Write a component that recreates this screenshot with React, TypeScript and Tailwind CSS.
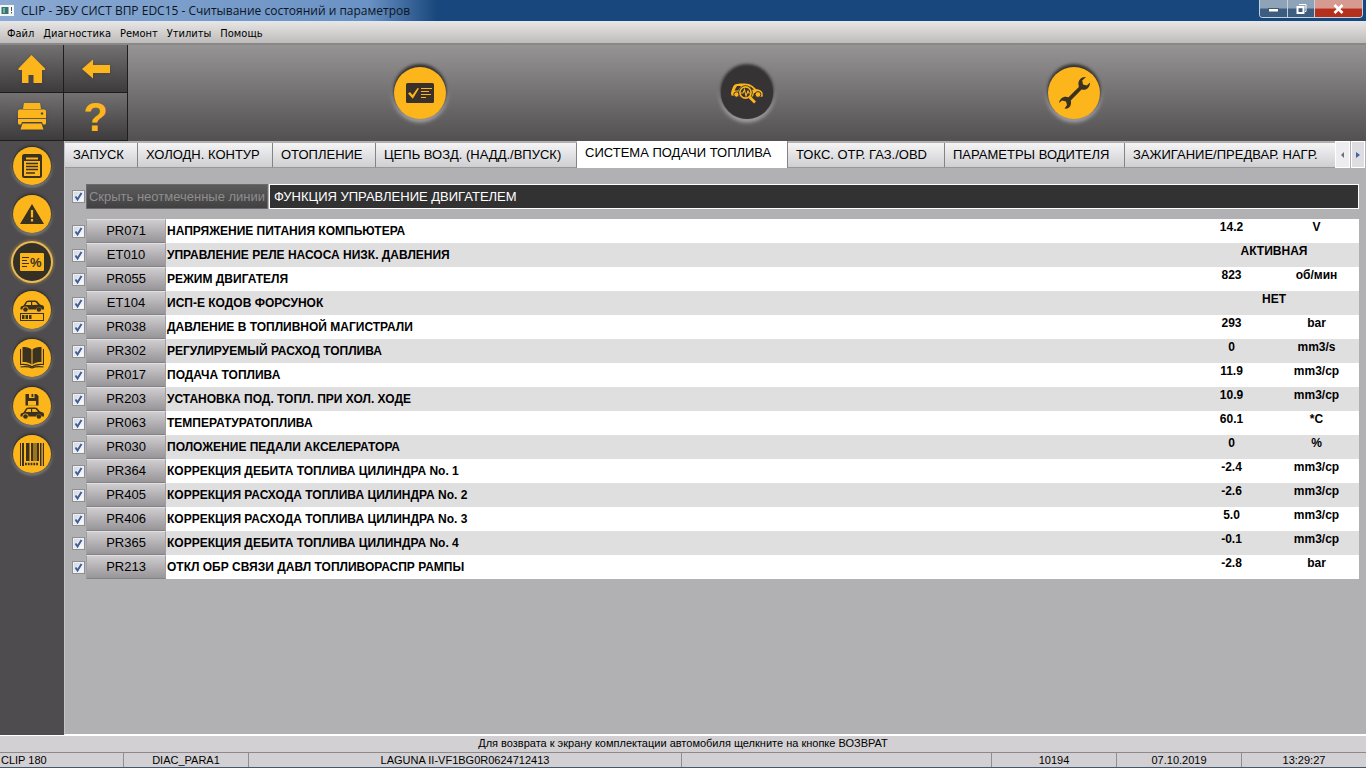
import React, { useState } from 'react';

type Row = {
    code: string;
    name: string;
    value: string;
    unit?: string;
};

const menuItems = ['Файл', 'Диагностика', 'Ремонт', 'Утилиты', 'Помощь'];

const tabs = [
    { label: 'ЗАПУСК', width: 'w-[73px]' },
    { label: 'ХОЛОДН. КОНТУР', width: 'w-[135px]' },
    { label: 'ОТОПЛЕНИЕ', width: 'w-[103px]' },
    { label: 'ЦЕПЬ ВОЗД. (НАДД./ВПУСК)', width: 'w-[201px]' },
    { label: 'СИСТЕМА ПОДАЧИ ТОПЛИВА', width: 'w-[211px]' },
    { label: 'ТОКС. ОТР. ГАЗ./OBD', width: 'w-[157px]' },
    { label: 'ПАРАМЕТРЫ ВОДИТЕЛЯ', width: 'w-[180px]' },
    { label: 'ЗАЖИГАНИЕ/ПРЕДВАР. НАГР.', width: 'w-[212px]' },
];

const rows: Row[] = [
    { code: 'PR071', name: 'НАПРЯЖЕНИЕ ПИТАНИЯ КОМПЬЮТЕРА', value: '14.2', unit: 'V' },
    { code: 'ET010', name: 'УПРАВЛЕНИЕ РЕЛЕ НАСОСА НИЗК. ДАВЛЕНИЯ', value: 'АКТИВНАЯ' },
    { code: 'PR055', name: 'РЕЖИМ ДВИГАТЕЛЯ', value: '823', unit: 'об/мин' },
    { code: 'ET104', name: 'ИСП-Е КОДОВ ФОРСУНОК', value: 'НЕТ' },
    { code: 'PR038', name: 'ДАВЛЕНИЕ В ТОПЛИВНОЙ МАГИСТРАЛИ', value: '293', unit: 'bar' },
    { code: 'PR302', name: 'РЕГУЛИРУЕМЫЙ РАСХОД ТОПЛИВА', value: '0', unit: 'mm3/s' },
    { code: 'PR017', name: 'ПОДАЧА ТОПЛИВА', value: '11.9', unit: 'mm3/cp' },
    { code: 'PR203', name: 'УСТАНОВКА ПОД. ТОПЛ. ПРИ ХОЛ. ХОДЕ', value: '10.9', unit: 'mm3/cp' },
    { code: 'PR063', name: 'ТЕМПЕРАТУРАТОПЛИВА', value: '60.1', unit: '*C' },
    { code: 'PR030', name: 'ПОЛОЖЕНИЕ ПЕДАЛИ АКСЕЛЕРАТОРА', value: '0', unit: '%' },
    { code: 'PR364', name: 'КОРРЕКЦИЯ ДЕБИТА ТОПЛИВА ЦИЛИНДРА No. 1', value: '-2.4', unit: 'mm3/cp' },
    { code: 'PR405', name: 'КОРРЕКЦИЯ РАСХОДА ТОПЛИВА ЦИЛИНДРА No. 2', value: '-2.6', unit: 'mm3/cp' },
    { code: 'PR406', name: 'КОРРЕКЦИЯ РАСХОДА ТОПЛИВА ЦИЛИНДРА No. 3', value: '5.0', unit: 'mm3/cp' },
    { code: 'PR365', name: 'КОРРЕКЦИЯ ДЕБИТА ТОПЛИВА ЦИЛИНДРА No. 4', value: '-0.1', unit: 'mm3/cp' },
    { code: 'PR213', name: 'ОТКЛ ОБР СВЯЗИ ДАВЛ ТОПЛИВОРАСПР РАМПЫ', value: '-2.8', unit: 'bar' },
];

const DARK = '#3a3120';

/* Toolbar icons */

function HomeIcon() {
    return (
        <svg width="28" height="28" viewBox="0 0 28 28" fill="#fdb51c" className="drop-shadow-sm">
            <path d="M13.5 0 27 13.5V15h-3v13h-8.5v-8h-5v8H4V15H.5v-1.5Z" />
        </svg>
    );
}

function ArrowIcon() {
    return (
        <svg width="28" height="20" viewBox="0 0 28 20" fill="#fdb51c" className="drop-shadow-sm">
            <path d="M0 10 11 .5V6h17v8H11v5.5Z" />
        </svg>
    );
}

function PrinterIcon() {
    return (
        <svg width="28" height="27" viewBox="0 0 28 27" fill="#fdb51c" className="drop-shadow-sm">
            <path d="M6 0h16l1 6H5Z" />
            <path d="M2 6.5h24a2 2 0 0 1 2 2V20a1.5 1.5 0 0 1-1.5 1.5H25L24 19H4l-1 2.5H1.5A1.5 1.5 0 0 1 0 20V8.5a2 2 0 0 1 2-2Z" />
            <path d="M4.500 20.500h19L25.500 26.500h-23Z" />
            <path d="M0 15.500h28" stroke="#5a5858" strokeWidth="1" />
            <circle cx="24" cy="10.500" r="1.200" fill="#4c4b4b" />
        </svg>
    );
}

/* Stage icons in the header */

function ChecklistIcon() {
    return (
        <svg width="28" height="20" viewBox="0 0 28 20">
            <rect width="28" height="20" rx="1.500" fill="#383029" />
            <path d="M2 10.500 4 9 6.500 12 11.500 5 13 5.500 6.800 15.800Z" fill="#fdb51c" />
            <path d="M15 5.500h11M15 8.500h8M15 11.500h10M15 14.500h5" stroke="#fdb51c" strokeWidth="1.200" />
        </svg>
    );
}

function CarSearchIcon() {
    return (
        <svg width="32" height="21" viewBox="0 0 32 21" fill="none">
            <path
                d="M0 10.500C.8 6.500 2 2.500 4 1.500 8 0 16 .3 19 1.500c2.500 1 4 3 6 4.500 3 .3 5.500 1.500 6.500 3.500l.3 4-3.300.500-1-3.500-4.500-.5-1 3.500-13 .5-1.500-3-4 .5L3.500 13 .5 12.500Z"
                fill="#fdb51c"
            />
            <path d="M3.500 7.500 6 3h4L7 7.500ZM19 3l4 3.500-3 .5Z" fill="#353334" />
            <circle cx="5.500" cy="11.500" r="2.700" fill="#fdb51c" stroke="#353334" />
            <circle cx="27" cy="11.500" r="2.900" fill="#fdb51c" stroke="#353334" />
            <circle cx="14.500" cy="9.500" r="7.200" fill="#353334" />
            <circle cx="14.500" cy="9.500" r="5.600" stroke="#fdb51c" strokeWidth="1.600" />
            <path d="M10 10h2l1.500-3.500 1.500 6.500 2-5 .8 2h1.500" stroke="#fdb51c" strokeWidth="1.100" />
            <path d="M18.500 14 24 19.500" stroke="#fdb51c" strokeWidth="2.800" />
        </svg>
    );
}

function WrenchIcon() {
    return (
        <svg width="34" height="34" viewBox="0 0 34 34" fill={DARK}>
            <path d="M29 1 C24.500 .5 21 4 21.500 8.500 L21.800 11 11.500 21.300 C7 19.500 2.500 22.500 2 27L5 24.500 9 25.500 10 29 7.500 32.500C12 33.500 15 29.500 13.800 24.500L24.500 13.500C29 15 33 11.500 33 6.500L29.800 9.500 26 8.500 25.200 4.500Z" />
        </svg>
    );
}

/* Sidebar icons */

const carPath =
    'M1 6.500 3.500 5.500 6 1.500Q7 .5 9 .5H15Q16.500 .5 17.500 1.500L20 4.500 23 5.500Q24 6 24 7.500V9.500H21.800A3 3 0 0 0 16 9.500H8.500A3 3 0 0 0 2.500 9.500H.500V7.500Z';

function Car() {
    return (
        <>
            <path d={carPath} fill={DARK} />
            <path d="M5.500 5 7.500 2H11V5ZM12.200 2H15.500L18 4.700 12.200 5Z" fill="#fdb51c" />
            <circle cx="5.500" cy="9.500" r="2.300" fill={DARK} />
            <circle cx="18.900" cy="9.500" r="2.300" fill={DARK} />
        </>
    );
}

function DocumentIcon() {
    return (
        <svg width="20" height="24" viewBox="0 0 20 24">
            <rect x="1" y="1" width="18" height="22" rx="1.500" fill="#fdb51c" stroke={DARK} strokeWidth="2" />
            <path d="M1 1h18v6H1Z" fill={DARK} />
            <path d="M4 4.500h12" stroke="#fdb51c" strokeWidth="2" />
            <path d="M4 9.500h12M4 12.500h12M4 15.500h12M4 19h9" stroke={DARK} strokeWidth="1.300" />
        </svg>
    );
}

function WarningIcon() {
    return (
        <svg width="24" height="20" viewBox="0 0 24 20">
            <path d="M12 0 24 20H0Z" fill={DARK} />
            <path d="M12 6v7.500M12 15v2.500" stroke="#fdb51c" strokeWidth="2.200" />
        </svg>
    );
}

function PercentIcon() {
    return (
        <svg width="26" height="18" viewBox="0 0 26 18">
            <rect x="1" width="24" height="18" rx="1" fill="#fdb51c" />
            <path d="M3 4.500h7M3 7.500h5M3 10.500h7M3 13.500h5" stroke={DARK} strokeWidth="1" />
            <text x="11" y="14" fontSize="13" fontWeight="700" fontFamily="Liberation Sans, sans-serif" fill={DARK}>
                %
            </text>
        </svg>
    );
}

function CarBatteryIcon() {
    return (
        <svg width="24" height="21" viewBox="0 0 24 21">
            <Car />
            <rect x=".5" y="13.500" width="23" height="7" fill="#fdb51c" stroke={DARK} />
            <path d="M2 15h2.500v4H2ZM5.500 15H8v4H5.500ZM9 15h2.500v4H9Z" fill={DARK} />
        </svg>
    );
}

function BookIcon() {
    return (
        <svg width="24" height="22" viewBox="0 0 24 22" fill={DARK}>
            <path d="M2.500 0C6 0 9.500.5 11.500 2.500v15C9 15.500 6 15 2.500 15ZM21.500 0C18 0 14.500.5 12.500 2.500v15c2.500-2 5.500-2.500 9-2.500Z" />
            <path d="M.5 2v15.500c4.500-.5 8.500 0 11.500 2.500 3-2.500 7-3 11.500-2.500V2" fill="none" stroke={DARK} strokeWidth="1.200" />
            <path d="M.5 20c4-.5 8-.5 11.500 1 3.500-1.500 7.500-1.500 11.500-1" fill="none" stroke={DARK} strokeWidth="1.200" />
        </svg>
    );
}

function CarSaveIcon() {
    return (
        <svg width="24" height="25" viewBox="0 0 24 25">
            <path d="M5.500 0H16.500L18.500 2V11.500H5.500Z" fill={DARK} />
            <path d="M9 0h5.500v4H9ZM8 7h8v4.500H8Z" fill="#fdb51c" />
            <path d="M11.500 0h1.800v3h-1.800Z" fill={DARK} />
            <g transform="translate(0 13)">
                <Car />
            </g>
        </svg>
    );
}

function BarcodeIcon() {
    return (
        <svg width="24" height="23" viewBox="0 0 24 23" fill={DARK}>
            <path d="M0 0h1v23H0ZM2 0h2v23H2ZM6 0h3.500v18H6ZM11 0h2.500v18H11ZM14.500 0h1v18h-1ZM16.500 0h2.500v18h-2.500ZM20 0h1.500v23H20ZM22.800 0H24v23h-1.200Z" />
            <path d="M5 21h14" stroke={DARK} strokeWidth="2.500" strokeDasharray="1.800 1" />
        </svg>
    );
}

const toolbarButtons = [
    { label: 'Домой', icon: <HomeIcon /> },
    { label: 'Назад', icon: <ArrowIcon /> },
    { label: 'Печать', icon: <PrinterIcon /> },
    { label: 'Справка', icon: <span className="text-[40px] leading-10 font-bold text-[#fdb51c]">?</span> },
];

const stages = [
    { label: 'Контроль', icon: <ChecklistIcon /> },
    { label: 'Диагностика', icon: <CarSearchIcon />, active: true },
    { label: 'Ремонт', icon: <WrenchIcon /> },
];

const sideButtons = [
    { label: 'Отчет', icon: <DocumentIcon /> },
    { label: 'Неисправности', icon: <WarningIcon /> },
    { label: 'Параметры', icon: <PercentIcon />, active: true },
    { label: 'Исполнительные механизмы', icon: <CarBatteryIcon /> },
    { label: 'Документация', icon: <BookIcon /> },
    { label: 'Сохранить', icon: <CarSaveIcon /> },
    { label: 'Идентификация', icon: <BarcodeIcon /> },
];

function CheckBox({ label, checked, onChange }: { label: string; checked: boolean; onChange: () => void }) {
    return (
        <label className="grid w-[13px] h-[13px]">
            <input
                type="checkbox"
                aria-label={label}
                checked={checked}
                onChange={onChange}
                className="col-start-1 row-start-1 appearance-none w-[13px] h-[13px] border border-[#8e8f94] bg-linear-to-br from-[#cfd6e0] to-white outline outline-[#f0f0f0] -outline-offset-2"
            />
            {checked && (
                <svg width="13" height="13" viewBox="0 0 13 13" className="col-start-1 row-start-1 pointer-events-none">
                    <path d="M3.500 6.500 5.500 9.500 9.500 3" fill="none" stroke="#3f5c95" strokeWidth="1.900" />
                </svg>
            )}
        </label>
    );
}

function TitleBar() {
    return (
        <header className="flex items-start justify-between h-[22px] border-b border-[#dfe6ee] bg-linear-to-r from-[#8ba9d2] from-0% via-[#6a92c4] via-27% to-[#17477c] to-32%">
            <div className="flex items-center gap-[7px] h-[21px]">
                <svg width="14" height="11" viewBox="0 0 14 11">
                    <rect width="14" height="11" fill="#f4f6f6" />
                    <rect x="1.500" y="2" width="7" height="7" fill="#36756f" />
                    <rect x="3" y="3" width="2" height="5" fill="#6fb0a0" />
                    <path d="M11.500 2v4M11.500 7v1.500" stroke="#555" />
                </svg>
                <h1 className="text-[12px] leading-4 text-[#0b1524] font-['Open_Sans','Noto_Sans',sans-serif]">
                    CLIP - ЭБУ СИСТ ВПР EDC15 - Считывание состояний и параметров
                </h1>
            </div>
            <div className="flex h-[18px] mr-[3px] rounded-b border border-t-0 border-[#c3d0de] overflow-hidden">
                <button aria-label="Свернуть" className="flex justify-center items-center w-7 bg-linear-to-b from-[#8fa3b8] from-45% to-[#3d5d80] to-55% border-r border-[#c3d0de]">
                    <svg width="11" height="5" viewBox="0 0 11 5" className="mt-1">
                        <rect x=".5" y=".5" width="10" height="3.500" fill="#fff" stroke="#465870" />
                    </svg>
                </button>
                <button aria-label="Восстановить" className="flex justify-center items-center w-[27px] bg-linear-to-b from-[#8fa3b8] from-45% to-[#3d5d80] to-55% border-r border-[#c3d0de]">
                    <svg width="11" height="12" viewBox="0 0 11 12" fill="none" stroke="#fff">
                        <path d="M3 1.500h7v7H9" />
                        <rect x="1.500" y="4" width="6" height="6" strokeWidth="2" />
                    </svg>
                </button>
                <button aria-label="Закрыть" className="flex justify-center items-center w-[47px] bg-linear-to-b from-[#d79a90] from-45% to-[#b5301c] to-55%">
                    <svg width="11" height="10" viewBox="0 0 11 10" stroke="#fff" strokeWidth="2.600">
                        <path d="M1.500 1 9.500 9M9.500 1 1.500 9" />
                    </svg>
                </button>
            </div>
        </header>
    );
}

function StatusBar() {
    const cell = 'border-l border-[#8f8f8f] text-center';
    return (
        <footer className="text-[11px] leading-[14px] text-black bg-[#d2d0d2]">
            <p className="h-[17px] text-center border-t border-white">
                Для возврата к экрану комплектации автомобиля щелкните на кнопке ВОЗВРАТ
            </p>
            <div className="flex h-[15px] border-t border-[#8b898b]">
                <span className="w-[123px] pl-px">CLIP 180</span>
                <span className={`${cell} w-[125px]`}>DIAC_PARA1</span>
                <span className={`${cell} w-[433px]`}>LAGUNA II-VF1BG0R0624712413</span>
                <span className={`${cell} flex-1`} />
                <span className={`${cell} w-[125px]`}>10194</span>
                <span className={`${cell} w-[125px]`}>07.10.2019</span>
                <span className={`${cell} w-[125px]`}>13:29:27</span>
            </div>
            <div className="h-px bg-[#43586e]" />
        </footer>
    );
}

export default function App() {
    const [activeTab, setActiveTab] = useState(4);
    const [allShown, setAllShown] = useState(true);
    const [unchecked, setUnchecked] = useState<string[]>([]);

    const toggleRow = (code: string) => {
        setUnchecked(prev => (prev.includes(code) ? prev.filter(c => c !== code) : [...prev, code]));
    };

    return (
        <div className="flex flex-col min-h-screen bg-[#b1b0b2] text-black font-['Liberation_Sans',Arial,sans-serif]">
            <TitleBar />

            {/* Menu */}
            <nav className="flex items-center gap-[9px] h-[23px] px-[7px] pt-[2px] bg-linear-to-b from-[#e6e5e4] to-[#bdbcbb] border-b-2 border-[#8a8886] text-[11px] leading-4 font-['DejaVu_Sans_Condensed','DejaVu_Sans',sans-serif]">
                {menuItems.map(item => (
                    <button key={item}>{item}</button>
                ))}
            </nav>

            {/* Toolbar */}
            <div className="flex h-24 bg-linear-to-b from-[#969495] to-[#525051]">
                <div className="grid grid-cols-2 w-32">
                    {toolbarButtons.map(({ label, icon }) => (
                        <button
                            key={label}
                            aria-label={label}
                            className="flex items-center justify-center h-12 bg-linear-to-b from-[#737172] to-[#3d3b3c] border-r border-b border-[#1f1e1e]"
                        >
                            {icon}
                        </button>
                    ))}
                </div>
                <div className="grid grid-cols-3 flex-1 items-center justify-items-center px-32">
                    {stages.map(({ label, icon, active }) => (
                        <button
                            key={label}
                            aria-label={label}
                            className={`flex items-center justify-center w-[52px] h-[52px] rounded-full shadow-[0_-2px_3px_1px_#353233,0_2px_4px_1px_#b0aeaf] ${active ? 'bg-[#353334]' : 'bg-[#fdb51c]'}`}
                        >
                            {icon}
                        </button>
                    ))}
                </div>
            </div>

            <div className="flex flex-1">
                {/* Sidebar */}
                <aside className="flex flex-col items-center gap-[10px] w-16 pt-[6px] bg-[#4e4c4e]">
                    {sideButtons.map(({ label, icon, active }) => (
                        <button
                            key={label}
                            aria-label={label}
                            className={`flex items-center justify-center w-[38px] h-[38px] rounded-full ${active ? 'bg-[#353026] shadow-[0_0_0_2px_#e9b955,0_0_3px_3px_#8a7345]' : 'bg-[#fdb51c] shadow-[0_-1px_2px_1px_#353233,0_1px_3px_1px_#8f8d86]'}`}
                        >
                            {icon}
                        </button>
                    ))}
                </aside>

                <main className="flex-1 min-w-0 border-l border-[#c4c3c5] border-b border-b-white">
                    {/* Tabs */}
                    <div className="flex h-[27px]">
                        <div role="tablist" className="flex flex-1 min-w-0 overflow-hidden items-end">
                            {tabs.map(({ label, width }, i) => (
                                <button
                                    key={label}
                                    role="tab"
                                    aria-selected={i === activeTab}
                                    onClick={() => setActiveTab(i)}
                                    className={`${width} shrink-0 px-2 text-left text-[13px] leading-4 whitespace-nowrap border-r border-[#858388] ${
                                        i === activeTab
                                            ? 'h-[27px] pb-1 bg-white'
                                            : 'h-[25px] pb-px bg-linear-to-b from-[#f5f5f6] to-[#cfced1] border-b border-b-[#98979a]'
                                    }`}
                                >
                                    {label}
                                </button>
                            ))}
                        </div>
                        <div className="flex gap-px pr-px">
                            <button aria-label="Предыдущие вкладки" className="flex items-center justify-center w-[15px] bg-[#ededef] border border-white">
                                <svg width="3" height="6" viewBox="0 0 3 6"><path d="M3 0v6L0 3Z" fill="#6b6e78" /></svg>
                            </button>
                            <button aria-label="Следующие вкладки" className="flex items-center justify-center w-[14px] bg-[#dedee2] border border-white">
                                <svg width="4" height="6" viewBox="0 0 4 6"><path d="M0 0v6L4 3Z" fill="#44639a" /></svg>
                            </button>
                        </div>
                    </div>

                    {/* Function header */}
                    <div className="flex items-center h-[25px] mt-4 mx-[7px]">
                        <CheckBox label="Показать все линии" checked={allShown} onChange={() => setAllShown(!allShown)} />
                        <button className="w-[182px] h-[25px] mx-px bg-linear-to-b from-[#5d5c5d] to-[#424142] border border-[#6b696b] text-[13px] leading-4 text-[#8f8d8f] whitespace-nowrap">
                            Скрыть неотмеченные линии
                        </button>
                        <h2 className="flex-1 h-[25px] pl-1 border border-white bg-[#333233] text-[13px] leading-[23px] text-white">
                            ФУНКЦИЯ УПРАВЛЕНИЕ ДВИГАТЕЛЕМ
                        </h2>
                    </div>

                    {/* Parameters */}
                    <div className="mt-[10px] mx-[7px]">
                        <table className="w-full table-fixed border-collapse">
                            <colgroup>
                                <col className="w-[14px]" />
                                <col className="w-20" />
                                <col />
                                <col className="w-[85px]" />
                                <col className="w-[85px]" />
                            </colgroup>
                            <tbody className="text-[12px] leading-4 font-bold">
                                {rows.map(({ code, name, value, unit }, i) => {
                                    const bg = i % 2 ? 'bg-[#e0dfe0]' : 'bg-white';
                                    return (
                                        <tr key={code} className="h-6">
                                            <td className="p-0">
                                                <CheckBox label={code} checked={!unchecked.includes(code)} onChange={() => toggleRow(code)} />
                                            </td>
                                            <td className="p-0">
                                                <button className="block w-full h-6 bg-linear-to-b from-[#cfcdcf] to-[#979597] border border-t-[#e2e1e2] border-x-[#a09ea0] border-b-[#858385] text-[13px] leading-4 font-normal">
                                                    {code}
                                                </button>
                                            </td>
                                            <td className={`${bg} p-0 pl-px whitespace-nowrap`}>{name}</td>
                                            {unit ? (
                                                <>
                                                    <td className={`${bg} p-0 text-center align-top`}>{value}</td>
                                                    <td className={`${bg} p-0 text-center align-top`}>{unit}</td>
                                                </>
                                            ) : (
                                                <td colSpan={2} className={`${bg} p-0 text-center align-top`}>{value}</td>
                                            )}
                                        </tr>
                                    );
                                })}
                            </tbody>
                        </table>
                    </div>
                </main>
            </div>

            <StatusBar />
        </div>
    );
}
